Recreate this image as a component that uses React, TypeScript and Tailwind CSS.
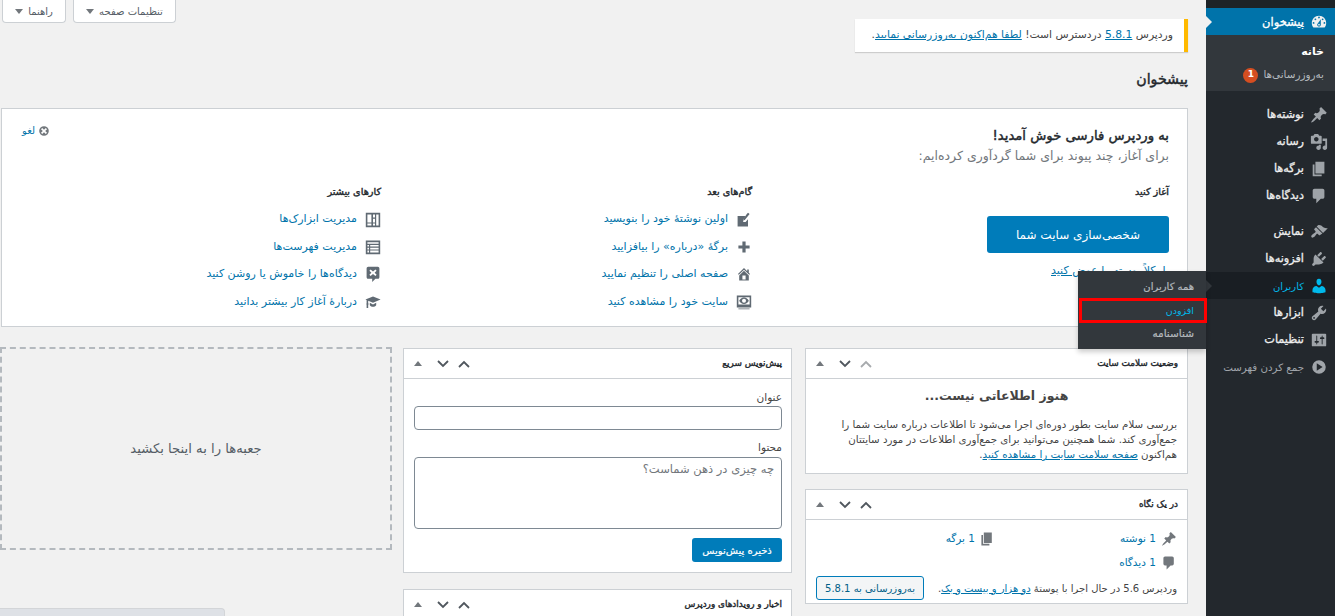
import React from "react";

type P = { d: string; s?: number; c?: string };
const Ic = ({ d, s = 20, c = "" }: P) => (
  <svg viewBox="0 0 20 20" width={s} height={s} className={`shrink-0 fill-current ${c}`}>
    <path d={d} fillRule="evenodd" />
  </svg>
);

const D = {
  dash: "M3.76 16h12.48c1.1-1.37 1.76-3.11 1.76-5 0-4.42-3.58-8-8-8s-8 3.58-8 8c0 1.89.66 3.63 1.76 5zM10 4c.55 0 1 .45 1 1s-.45 1-1 1-1-.45-1-1 .45-1 1-1zM6 6c.55 0 1 .45 1 1s-.45 1-1 1-1-.45-1-1 .45-1 1-1zm8 0c.55 0 1 .45 1 1s-.45 1-1 1-1-.45-1-1 .45-1 1-1zm-5.37 5.55L12 7v6c0 1.1-.9 2-2 2s-2-.9-2-2c0-.57.24-1.08.63-1.45zM4 10c.55 0 1 .45 1 1s-.45 1-1 1-1-.45-1-1 .45-1 1-1zm12 0c.55 0 1 .45 1 1s-.45 1-1 1-1-.45-1-1 .45-1 1-1zm-5 3c0-.55-.45-1-1-1s-1 .45-1 1 .45 1 1 1 1-.45 1-1z",
  pin: "M10.44 3.02l1.82-1.82 6.36 6.35-1.83 1.82c-1.05-.68-2.48-.57-3.41.36l-.75.75c-.92.93-1.04 2.35-.35 3.41l-1.83 1.82-2.41-2.41-2.8 2.79c-.42.42-3.38 2.71-3.8 2.29s1.86-3.39 2.28-3.81l2.79-2.79L4.1 9.36l1.83-1.82c1.05.69 2.48.57 3.4-.36l.75-.75c.93-.92 1.05-2.35.36-3.41z",
  media: "M13 11V4c0-.55-.45-1-1-1h-1.67L9 1H5L3.67 3H2c-.55 0-1 .45-1 1v7c0 .55.45 1 1 1h10c.55 0 1-.45 1-1zM7 4.5c1.38 0 2.5 1.12 2.5 2.5S8.38 9.5 7 9.5 4.5 8.38 4.5 7 5.62 4.5 7 4.5zM14 6h5v10.5c0 1.38-1.12 2.5-2.5 2.5S14 17.88 14 16.5s1.12-2.5 2.5-2.5c.17 0 .34.02.5.05V9h-3V6zm-4 8.05V13h2v3.5c0 1.38-1.12 2.5-2.5 2.5S7 17.88 7 16.5 8.12 14 9.5 14c.17 0 .34.02.5.05z",
  page: "M6 15V2h10v13H6zm-1 1h8v2H3V5h2v11z",
  comment: "M5 2h9c1.1 0 2 .9 2 2v7c0 1.1-.9 2-2 2h-2l-5 5v-5H5c-1.1 0-2-.9-2-2V4c0-1.1.9-2 2-2z",
  brush: "M14.48 11.06L7.41 3.99l1.5-1.5c.5-.56 2.3-.47 3.51.32 1.21.8 1.43 1.28 2.91 2.1 1.18.64 2.45 1.26 4.45.85zm-.71.71L6.7 4.7 4.93 6.47c-.39.39-.39 1.02 0 1.41l1.06 1.06c.39.39.39 1.03 0 1.42-.6.6-1.43 1.11-2.21 1.69-.35.26-.7.53-1.01.84C1.43 13.71.96 15.12 1.75 15.91c.79.79 2.2.32 3.03-.51.31-.31.58-.66.85-1.02.57-.78 1.08-1.61 1.69-2.21.39-.39 1.02-.39 1.41 0l1.06 1.06c.39.39 1.02.39 1.41 0z",
  plugin: "M13.11 4.36L9.87 7.6 8 5.73l3.24-3.24c.35-.34 1.05-.2 1.56.32.52.51.66 1.21.31 1.55zm-8 1.77l.91-1.12 9.01 9.01-1.19.84c-.71.71-2.63 1.16-3.82 1.16H6.14L4.9 17.26c-.59.59-1.54.59-2.12 0-.59-.58-.59-1.53 0-2.12l1.24-1.24v-3.88c0-1.13.4-3.19 1.09-3.89zm7.26 3.97l3.24-3.24c.34-.35 1.04-.21 1.55.31.52.51.66 1.21.31 1.55l-3.24 3.25z",
  user: "M10 9.25c-2.27 0-2.73-3.44-2.73-3.44C7 4.02 7.82 2 9.97 2c2.16 0 2.98 2.02 2.71 3.81 0 0-.41 3.44-2.68 3.44zm0 2.57L12.72 10c2.39 0 4.52 2.33 4.52 4.53v2.49s-3.65 1.13-7.24 1.13c-3.65 0-7.24-1.13-7.24-1.13v-2.49c0-2.25 1.94-4.48 4.47-4.48z",
  tools: "M16.68 9.77c-1.34 1.34-3.3 1.67-4.95.99l-5.41 6.52c-.99.99-2.59.99-3.58 0s-.99-2.59 0-3.57l6.52-5.42c-.68-1.65-.35-3.61.99-4.95 1.28-1.28 3.12-1.62 4.72-1.06l-2.89 2.89 2.82 2.82 2.86-2.87c.53 1.58.18 3.39-1.08 4.65zM3.81 16.21c.4.39 1.04.39 1.43 0 .4-.4.4-1.04 0-1.43-.39-.4-1.03-.4-1.43 0-.39.39-.39 1.03 0 1.43z",
  settings: "M18 16V4c0-.55-.45-1-1-1H3c-.55 0-1 .45-1 1v12c0 .55.45 1 1 1h14c.55 0 1-.45 1-1zM8 11h1c.55 0 1 .45 1 1s-.45 1-1 1H8v1.5c0 .28-.22.5-.5.5s-.5-.22-.5-.5V13H6c-.55 0-1-.45-1-1s.45-1 1-1h1V5.5c0-.28.22-.5.5-.5s.5.22.5.5V11zm5-2h-1c-.55 0-1-.45-1-1s.45-1 1-1h1V5.5c0-.28.22-.5.5-.5s.5.22.5.5V7h1c.55 0 1 .45 1 1s-.45 1-1 1h-1v5.5c0 .28-.22.5-.5.5s-.5-.22-.5-.5V9z",
  collapse: "M10 2.5a7.5 7.5 0 1 0 0 15 7.5 7.5 0 0 0 0-15zM7.5 5.8l6.5 4.2-6.5 4.2z",
  edit: "M2 5h10l-3 4v3.5h3L15 9v9H2zM13.5 2.5l1.5-1.5 2 1.5-6 7.5-2 .5.5-2z",
  plus: "M8 3h4v5h5v4h-5v5H8v-5H3V8h5z",
  home: "M16 8.5l1.53 1.53-1.06 1.06L10 4.62l-6.47 6.47-1.06-1.06L10 2.5l4 4v-2h2v4zm-6-2.46l6 5.99V18H4v-5.97zM12 17v-5H8v5h4z",
  view: "M1 2h18v15H1zM3 4v9h14V4zM10 4.5c2.8 0 5 1.8 6 4-1 2.2-3.2 4-6 4s-5-1.8-6-4c1-2.2 3.2-4 6-4zm0 1.5a2.5 2.5 0 1 0 0 5 2.5 2.5 0 0 0 0-5zM3 18h14v1.2H3z",
  widgets: "M1 1h18v18H1zM3 14.5v2.5h5v-2.5zM3 3v10h5V3zM10 3v4h2.5V3zM14 3v14h3V3zM10 8.5V13h2.500V8.500zM10 14.500V17h2.500v-2.500z",
  list: "M1 2h18v17H1zM3 4v2h14V4zM3 7.500v2h2v-2zM6.500 7.500v2H17v-2zM3 11v2h2v-2zM6.500 11v2H17v-2zM3 14.500V17h2v-2.500zM6.500 14.500V17H17v-2.500z",
  cmx: "M4 1h12c1.100 0 2 .9 2 2v11c0 1.100-.9 2-2 2h-3l-4 4v-4H4c-1.100 0-2-.9-2-2V3c0-1.100.9-2 2-2zm3 3.500L5.500 6 8 8.500 5.500 11 7 12.500l3-2.500 3 2.500 1.500-1.500L12 8.500 14.500 6 13 4.500 10 7z",
  learn: "M10 3l9.500 4-9.500 4-6-2.500V12l1 .5-1 .5v4.500H2V13l-.5-.5.5-.5V7.500L.5 7zM6 11l4 2 4-2v3c-1 1.300-2.500 2-4 2s-3-.7-4-2z",
  dismiss: "M10 2a8 8 0 1 0 0 16 8 8 0 0 0 0-16zM7 5l3 3 3-3 2 2-3 3 3 3-2 2-3-3-3 3-2-2 3-3-3-3z",
};

const MenuItem = ({ icon, label, cls = "", ic = "text-[#9ea3a8]" }: { icon: string; label: string; cls?: string; ic?: string }) => (
  <div className={`relative flex h-[27px] items-center ${cls}`}>
    <div className={`flex w-[27px] mr-[3px] justify-center ${ic}`}>
      <Ic d={icon} s={18} />
    </div>
    <span className="mr-[1px] pt-[2px] text-[11.25px] [-webkit-text-stroke:0.3px_currentColor] whitespace-nowrap">{label}</span>
  </div>
);

const Sidebar = () => (
  <aside className="relative z-10 w-[129px] shrink-0 bg-[#23282d] text-[#eeeeee] h-[616px]">
    <div className="h-2 bg-[#1d2327]" />
    <div className="relative flex h-[27px] items-center bg-[#0073aa] text-white">
      <div className="flex w-[27px] mr-[3px] justify-center text-[#f0f0f0]"><Ic d={D.dash} s={18} /></div>
      <span className="mr-[1px] pt-[2px] text-[11.5px] [-webkit-text-stroke:0.3px_currentColor]">پیشخوان</span>
      <div className="absolute left-0 top-[8px] border-y-[6px] border-l-[6px] border-y-transparent border-l-[#f1f1f1]" />
    </div>
    <div className="h-[56px] bg-[#32373c] pr-[11px] pt-[5px]">
      <div className="h-[24px] leading-[24px] text-[11px] font-bold text-white">خانه</div>
      <div className="flex h-[22px] items-center text-[10.4px] text-[#b4b9be]">
        <span className="whitespace-nowrap">به‌روزرسانی‌ها</span>
        <span className="mr-[5px] flex h-[15px] w-[15px] items-center justify-center rounded-full bg-[#d54e21] text-[9px] font-bold text-white">1</span>
      </div>
    </div>
    <div className="h-[10px]" />
    <MenuItem icon={D.pin} label="نوشته‌ها" />
    <MenuItem icon={D.media} label="رسانه" />
    <MenuItem icon={D.page} label="برگه‌ها" />
    <MenuItem icon={D.comment} label="دیدگاه‌ها" />
    <div className="h-[9px]" />
    <MenuItem icon={D.brush} label="نمایش" />
    <MenuItem icon={D.plugin} label="افزونه‌ها" />
    <div className="relative flex h-[27px] items-center bg-[#191e23] text-[#00b9eb]">
      <div className="flex w-[27px] mr-[3px] justify-center"><Ic d={D.user} s={18} /></div>
      <span className="mr-[1px] pt-[2px] text-[10px]">کاربران</span>
      <div className="absolute left-0 top-[8px] border-y-[6px] border-l-[6px] border-y-transparent border-l-[#32373c]" />
      <div className="absolute right-full top-[-1px] w-[128px] h-[78px] bg-[#32373c] pt-[5px] text-[10px] text-[#b4b9be] shadow-[0_3px_5px_rgba(0,0,0,0.2)]">
        <div className="h-[22px] leading-[22px] pr-[12px] [-webkit-text-stroke:0.2px_currentColor]">همه کاربران</div>
        <div className="relative h-[25px] leading-[25px] pr-[12px] text-[9.5px] text-[#00b9eb]">
          افزودن
          <div className="absolute inset-y-0 left-[1px] right-[-1px] border-[3px] border-[#ff0000]" />
        </div>
        <div className="h-[20px] leading-[20px] pr-[12px] text-[10.5px] [-webkit-text-stroke:0.2px_currentColor]">شناسنامه</div>
      </div>
    </div>
    <MenuItem icon={D.tools} label="ابزارها" />
    <MenuItem icon={D.settings} label="تنظیمات" />
    <div className="flex h-[27px] items-center text-[#a0a5aa]">
      <div className="flex w-[27px] mr-[3px] justify-center"><Ic d={D.collapse} s={18} /></div>
      <span className="mr-[1px] pt-[2px] text-[10.25px] whitespace-nowrap">جمع کردن فهرست</span>
    </div>
  </aside>
);

const Tab = ({ label, w }: { label: string; w: string }) => (
  <div className={`flex h-[23px] ${w} items-center justify-center gap-[5px] rounded-b-[4px] border border-t-0 border-[#ccd0d4] bg-white text-[10px] text-[#555d66]`}>
    <span className="whitespace-nowrap">{label}</span>
    <span className="h-0 w-0 border-x-[4px] border-t-[5px] border-x-transparent border-t-[#72777c]" />
  </div>
);

const A = ({ children, cls = "" }: { children: React.ReactNode; cls?: string }) => (
  <span className={`text-[#0073aa] ${cls}`}>{children}</span>
);

const WRow = ({ icon, label }: { icon: string; label: string }) => (
  <div className="flex h-[27.4px] items-center">
    <div className="flex w-[22px] justify-start text-[#606a73]"><Ic d={icon} s={16} /></div>
    <A cls="mr-[2px] text-[11px] whitespace-nowrap">{label}</A>
  </div>
);

const Welcome = () => (
  <section className="h-[219px] border border-[#ccd0d4] bg-white pr-[18px] pt-[17px]">
    <div className="flex items-start justify-between">
      <div>
        <h2 className="text-[13.2px] [-webkit-text-stroke:0.45px_currentColor] leading-[20px] text-[#23282d]">به وردپرس فارسی خوش آمدید!</h2>
        <p className="text-[12.5px] leading-[20px] text-[#72777c]">برای آغاز، چند پیوند برای شما گردآوری کرده‌ایم:</p>
      </div>
      <div className="ml-[20px] -mt-[3px] flex items-center gap-[3px] text-[10px]">
        <Ic d={D.dismiss} s={12} c="text-[#72777c]" />
        <A>لغو</A>
      </div>
    </div>
    <div className="mt-[18px] flex">
      <div className="w-[417px] shrink-0">
        <h3 className="text-[9.7px] [-webkit-text-stroke:0.4px_currentColor] leading-[16px] text-[#23282d]">آغاز کنید</h3>
        <div className="mt-[16px] flex h-[37px] w-[182px] items-center justify-center rounded-[3px] bg-[#007cba] text-[12px] text-white">شخصی‌سازی سایت شما</div>
        <div className="mt-[11px] text-[11px] leading-[14px]"><A cls="underline">یا، کلاً پوسته را عوض کنید</A></div>
      </div>
      <div className="w-[371px] shrink-0">
        <h3 className="text-[9.7px] [-webkit-text-stroke:0.4px_currentColor] leading-[16px] text-[#23282d]">گام‌های بعد</h3>
        <div className="mt-[6px]">
          <WRow icon={D.edit} label="اولین نوشتهٔ خود را بنویسید" />
          <WRow icon={D.plus} label="برگهٔ «درباره» را بیافزایید" />
          <WRow icon={D.home} label="صفحه اصلی را تنظیم نمایید" />
          <WRow icon={D.view} label="سایت خود را مشاهده کنید" />
        </div>
      </div>
      <div className="flex-1">
        <h3 className="text-[9.7px] [-webkit-text-stroke:0.4px_currentColor] leading-[16px] text-[#23282d]">کارهای بیشتر</h3>
        <div className="mt-[6px]">
          <WRow icon={D.widgets} label="مدیریت ابزارک‌ها" />
          <WRow icon={D.list} label="مدیریت فهرست‌ها" />
          <WRow icon={D.cmx} label="دیدگاه‌ها را خاموش یا روشن کنید" />
          <WRow icon={D.learn} label="دربارهٔ آغاز کار بیشتر بدانید" />
        </div>
      </div>
    </div>
  </section>
);

const Chevron = ({ up, c = "text-[#50575e]" }: { up?: boolean; c?: string }) => (
  <svg viewBox="0 0 12 8" width="12" height="8" className={`${c} fill-none stroke-current stroke-[1.8]`}>
    <path d={up ? "M1 7l5-5 5 5" : "M1 1l5 5 5-5"} />
  </svg>
);

const BoxHead = ({ title, first }: { title: string; first?: boolean }) => (
  <div className="flex h-[30px] items-center justify-between border-b border-[#ccd0d4] pl-[10px] pr-[9px]">
    <h3 className="text-[8.9px] [-webkit-text-stroke:0.4px_currentColor] whitespace-nowrap text-[#23282d]">{title}</h3>
    <div className="flex items-center gap-[9px]">
      <Chevron up c={first ? "text-[#a7aaad]" : "text-[#50575e]"} />
      <Chevron />
      <span className="mr-[6px] h-0 w-0 border-x-[4px] border-b-[5px] border-x-transparent border-b-[#72777c]" />
    </div>
  </div>
);

const Box = ({ cls = "", children }: { cls?: string; children: React.ReactNode }) => (
  <section className={`border border-[#ccd0d4] bg-white ${cls}`}>{children}</section>
);

const Main = () => (
  <main className="relative flex-1 pr-[18px] pl-[1px] min-w-0">
    <div className="flex items-start justify-between h-[52px]">
      <div className="mt-[19px] flex h-[33px] w-[333px] items-center border-r-4 border-[#ffb900] bg-white pr-[11px] text-[10.75px] whitespace-nowrap text-[#444444] shadow-[0_1px_1px_rgba(0,0,0,0.15)]">
        <span>وردپرس <A cls="underline">5.8.1</A> دردسترس است! <A cls="underline">لطفا هم‌اکنون به‌روزرسانی نمایید</A>.</span>
      </div>
      <div className="ml-[1px] flex gap-[7px]">
        <Tab label="تنظیمات صفحه" w="w-[103px]" />
        <Tab label="راهنما" w="w-[64px]" />
      </div>
    </div>
    <h1 className="mt-[15px] h-[41px] text-[14.2px] [-webkit-text-stroke:0.45px_currentColor] leading-[24px] text-[#23282d]">پیشخوان</h1>
    <Welcome />
    <div className="mt-[21px] flex items-start ml-[-1px]">
      <div className="w-[383px] shrink-0">
        <Box cls="h-[126px]">
          <BoxHead title="وضعیت سلامت سایت" first />
          <div className="px-[10px] text-[#444444]">
            <p className="mt-[9px] text-center text-[12.5px] font-bold leading-[16px]">هنوز اطلاعاتی نیست...</p>
            <p className="mt-[13px] text-[10.25px] leading-[15px]">بررسی سلام سایت بطور دوره‌ای اجرا می‌شود تا اطلاعات درباره سایت شما را جمع‌آوری کند. شما همچنین می‌توانید برای جمع‌آوری اطلاعات در مورد سایتتان هم‌اکنون <A cls="underline">صفحه سلامت سایت را مشاهده کنید</A>.</p>
          </div>
        </Box>
        <Box cls="mt-[15px] h-[115px]">
          <BoxHead title="در یک نگاه" />
          <div className="px-[10px] text-[10.5px] text-[#444444]">
            <div className="flex h-[36px] items-center pt-[1px]">
              <div className="flex w-[182px] items-center gap-[5px]"><span className="text-[#72777c]"><Ic d={D.pin} s={16} /></span><A>1 نوشته</A></div>
              <div className="flex items-center gap-[4px]"><span className="text-[#72777c]"><Ic d={D.page} s={16} /></span><A>1 برگه</A></div>
            </div>
            <div className="flex h-[14px] items-center gap-[5px]"><span className="text-[#72777c]"><Ic d={D.comment} s={16} /></span><A>1 دیدگاه</A></div>
            <div className="flex items-center justify-between mt-[6px]">
              <span className="whitespace-nowrap text-[10px]">وردپرس 5.6 در حال اجرا با پوستهٔ <A cls="underline">دو هزار و بیست و یک</A>.</span>
              <div className="flex h-[24px] w-[108px] items-center justify-center rounded-[3px] border border-[#007cba] bg-[#f3f5f6] text-[10px] text-[#016087] whitespace-nowrap">به‌روزرسانی به 5.8.1</div>
            </div>
          </div>
        </Box>
      </div>
      <div className="mr-[13px] w-[389px] shrink-0">
        <Box cls="h-[225px]">
          <BoxHead title="پیش‌نویس سریع" />
          <div className="pr-[9px] pl-[10px] text-[10.5px] text-[#444444]">
            <div className="pt-[10px] leading-[16px]">عنوان</div>
            <input className="mt-[1px] block h-[24px] w-full rounded-[4px] border border-[#7e8993] bg-white" />
            <div className="mt-[9px] leading-[16px]">محتوا</div>
            <textarea className="mt-[2px] block h-[72px] w-full resize-none rounded-[4px] border border-[#7e8993] px-[7px] py-[3px] text-[11.5px] placeholder:text-[#72777c]" placeholder="چه چیزی در ذهن شماست؟" />
            <div className="mt-[9px] flex h-[24px] w-[90px] items-center justify-center rounded-[3px] bg-[#007cba] text-[10px] [-webkit-text-stroke:0.2px_currentColor] whitespace-nowrap text-white">ذخیره پیش‌نویس</div>
          </div>
        </Box>
        <Box cls="mt-[16px] h-[60px]">
          <BoxHead title="اخبار و رویدادهای وردپرس" />
        </Box>
      </div>
      <div className="mr-[11px] -mt-[1px] flex h-[203px] w-[392px] shrink-0 items-center justify-center border-2 border-dashed border-[#b4b9be] text-[13.2px] text-[#555d66]">
        جعبه‌ها را به اینجا بکشید
      </div>
    </div>
  </main>
);

export default function App() {
  return (
    <div dir="rtl" className="relative flex h-[616px] w-[1335px] overflow-hidden bg-[#f1f1f1] [font-family:'DejaVu_Sans',sans-serif]">
      <Sidebar />
      <Main />
      <div className="absolute bottom-0 left-0 h-[8px] w-[225px] rounded-tr-[4px] border-t border-r border-[#d3d5d8] bg-[#dee1e6]" />
    </div>
  );
}
